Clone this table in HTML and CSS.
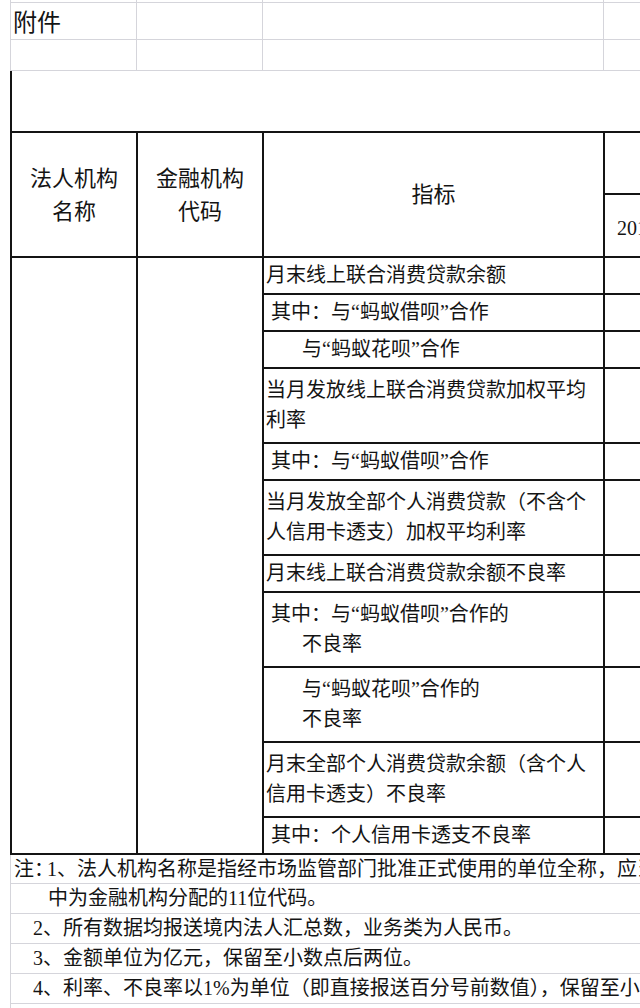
FILE: index.html
```html
<!DOCTYPE html>
<html lang="zh-CN">
<head>
<meta charset="utf-8">
<title>附件</title>
<link rel="stylesheet" href="styles.css">
</head>
<body>
<div class="sheet">
  <div class="top">
    <div class="g"></div><div class="g"></div><div class="g"></div><div class="g"></div>
    <div class="g fj">附件</div><div class="g"></div><div class="g"></div><div class="g"></div>
    <div class="g"></div><div class="g"></div><div class="g"></div><div class="g"></div>
  </div>

  <div class="tbl">
    <div class="c title"></div>
    <div class="c hd h1"><span>法人机构<br>名称</span></div>
    <div class="c hd h2"><span>金融机构<br>代码</span></div>
    <div class="c hd h3"><span>指标</span></div>
    <div class="c h4a"></div>
    <div class="c h4b"><span>2019年</span></div>
    <div class="c m1"></div>
    <div class="c m2"></div>

    <div class="c it i0"><span>月末线上联合消费贷款余额</span></div><div class="c v"></div>
    <div class="c it i1"><span>其中：与“蚂蚁借呗”合作</span></div><div class="c v"></div>
    <div class="c it i2"><span>与“蚂蚁花呗”合作</span></div><div class="c v"></div>
    <div class="c it i0"><span>当月发放线上联合消费贷款加权平均<br>利率</span></div><div class="c v"></div>
    <div class="c it i1"><span>其中：与“蚂蚁借呗”合作</span></div><div class="c v"></div>
    <div class="c it i0"><span>当月发放全部个人消费贷款（不含个<br>人信用卡透支）加权平均利率</span></div><div class="c v"></div>
    <div class="c it i0"><span>月末线上联合消费贷款余额不良率</span></div><div class="c v"></div>
    <div class="c it i1"><span>其中：与“蚂蚁借呗”合作的<br><span class="sub">不良率</span></span></div><div class="c v"></div>
    <div class="c it i2"><span>与“蚂蚁花呗”合作的<br>不良率</span></div><div class="c v"></div>
    <div class="c it i0"><span>月末全部个人消费贷款余额（含个人<br>信用卡透支）不良率</span></div><div class="c v"></div>
    <div class="c it i1"><span>其中：个人信用卡透支不良率</span></div><div class="c v"></div>
  </div>

  <div class="notes">
    <div class="n n1">注<span class="nc">：</span>1、法人机构名称是指经市场监管部门批准正式使用的单位全称，应当与营业执照一致</div>
    <div class="n n1b">中为金融机构分配的11位代码。</div>
    <div class="n n2">2、所有数据均报送境内法人汇总数，业务类为人民币。</div>
    <div class="n n2">3、金额单位为亿元，保留至小数点后两位。</div>
    <div class="n n2">4、利率、不良率以1%为单位（即直接报送百分号前数值），保留至小数点后两位。</div>
    <div class="n"></div>
  </div>
</div>
</body>
</html>
```

FILE: styles.css
```css
html, body {
  margin: 0;
  padding: 0;
  background: #fff;
}

body {
  font-family: "Liberation Serif", "Noto Sans CJK SC", serif;
  color: #141414;
}

.sheet {
  width: 640px;
  height: 1008px;
  overflow: hidden;
  padding-left: 10px;
  box-sizing: border-box;
}

/* light spreadsheet grid at top */
.top {
  display: grid;
  grid-template-columns: 125px 125px 340px 220px;
  grid-template-rows: 2px 36px 30px;
  gap: 1px;
  padding: 0 0 1px 1px;
  background: #d5d5db;
  width: max-content;
}

.g {
  background: #fff;
}

.fj {
  font-family: "Noto Sans CJK SC", sans-serif;
  font-size: 24px;
  line-height: 36px;
  padding-left: 2px;
}

/* black bordered table */
.tbl {
  display: grid;
  grid-template-columns: 124px 124px 339px 220px;
  grid-template-rows: 60px 60px 61px 35px 35px 35px 73px 35px 73px 35px 73px 73px 73px 35px;
  gap: 2px;
  padding: 0 0 2px 2px;
  background: #141414;
  width: max-content;
}

.c {
  background: #fff;
}

.title {
  grid-column: 1 / -1;
  grid-row: 1;
}

.hd {
  font-family: "Noto Sans CJK SC", sans-serif;
  font-size: 22px;
  line-height: 33px;
  display: flex;
  align-items: center;
  justify-content: center;
  text-align: center;
  grid-row: 2 / span 2;
  padding-bottom: 4px;
}

.h1 { grid-column: 1; }
.h2 { grid-column: 2; }
.h3 { grid-column: 3; }

.h4a {
  grid-column: 4;
  grid-row: 2;
}

.h4b {
  grid-column: 4;
  grid-row: 3;
  font-size: 20px;
  display: flex;
  align-items: center;
  padding-left: 12px;
  padding-top: 2px;
  white-space: nowrap;
}

.m1 {
  grid-column: 1;
  grid-row: 4 / span 11;
}

.m2 {
  grid-column: 2;
  grid-row: 4 / span 11;
}

.it {
  grid-column: 3;
  font-size: 20px;
  line-height: 30px;
  display: flex;
  align-items: center;
  white-space: nowrap;
  padding-bottom: 2px;
}

.v {
  grid-column: 4;
}

.i0 { padding-left: 2px; }
.i1 { padding-left: 7px; }
.i2 { padding-left: 38px; }

.sub {
  padding-left: 31px;
}

/* notes */
.notes {
  border-left: 1px solid #d5d5db;
}

.n {
  height: 29px;
  line-height: 29px;
  border-bottom: 1px solid #d5d5db;
  font-size: 20px;
  white-space: nowrap;
  overflow: hidden;
}

.n1 {
  height: 28px;
  line-height: 28px;
  padding-left: 3px;
}

.nc {
  letter-spacing: -7px;
}

.n1b {
  padding-left: 37px;
}

.n2 {
  padding-left: 22px;
}
```
